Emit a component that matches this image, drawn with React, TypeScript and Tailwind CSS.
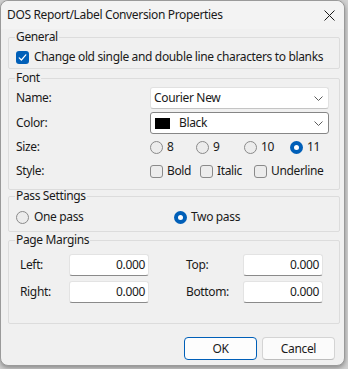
import type { ReactNode } from "react";

const font = { fontFamily: '"Noto Sans", "Segoe UI", sans-serif' };

function Check({ on }: { on?: boolean }) {
  if (on)
    return (
      <span className="flex size-[13px] shrink-0 items-center justify-center rounded-[3px] bg-[#005fb8]">
        <svg width="9" height="9" viewBox="0 0 9 9" fill="none">
          <path d="M1.2 4.8 3.4 7 7.8 1.8" stroke="#fff" strokeWidth="1.2" strokeLinecap="round" strokeLinejoin="round" />
        </svg>
      </span>
    );
  return <span className="size-[13px] shrink-0 rounded-[3px] border border-[#8a8a8a] bg-[#ececec]" />;
}

function Radio({ on }: { on?: boolean }) {
  if (on)
    return (
      <span className="flex size-[13px] shrink-0 items-center justify-center rounded-full bg-[#005fb8]">
        <span className="size-[5px] rounded-full bg-white" />
      </span>
    );
  return <span className="size-[13px] shrink-0 rounded-full border border-[#8a8a8a] bg-[#ececec]" />;
}

function Chevron() {
  return (
    <svg width="9" height="5" viewBox="0 0 9 5" fill="none" className="ml-auto mr-[5px]">
      <path d="M0.5 0.5 4.5 4.5 8.5 0.5" stroke="#5c5c5c" strokeWidth="1" />
    </svg>
  );
}

function Group({ title, className, children }: { title: string; className?: string; children: ReactNode }) {
  return (
    <fieldset className={`rounded-[2px] border border-[#dcdcdc] pl-[7px] pr-[10px] ${className ?? ""}`}>
      <legend className="ml-[-1px] px-[1px] leading-[16px]">{title}</legend>
      {children}
    </fieldset>
  );
}

function Num({ value }: { value: string }) {
  return (
    <div className="flex h-[22px] w-[80px] items-center justify-end rounded-[3px] border border-[#e3e3e3] border-b-[#8a8a8a] bg-white pr-[3px]">
      {value}
    </div>
  );
}

export default function App() {
  return (
    <div className="h-[369px] w-[348px] whitespace-nowrap bg-[#d2d2d2] text-[12px] tracking-[-0.35px] text-[#1a1a1a]" style={font}>
      <div className="flex h-[366px] w-[345px] flex-col rounded-[8px] border border-[#9a9a9a] bg-[#f0f0f0] shadow-[0_2px_5px_rgba(0,0,0,0.35)]">
        <div className="flex h-[28px] shrink-0 items-center rounded-t-[8px] bg-[#f3f3f3] pl-[6px] pr-[9px]">
          <span>DOS Report/Label Conversion Properties</span>
          <svg width="11" height="11" viewBox="0 0 11 11" className="ml-auto" fill="none">
            <path d="M0.5 0.5 10.5 10.5M10.5 0.5 0.5 10.5" stroke="#1a1a1a" strokeWidth="1" />
          </svg>
        </div>

        <div className="flex flex-1 flex-col pl-[7px] pr-[4px]">
          <Group title="General" className="pb-[3px]">
            <div className="mt-[4px] flex h-[16px] items-center gap-[5px]">
              <Check on />
              <span>Change old single and double line characters to blanks</span>
            </div>
          </Group>

          <Group title="Font" className="mt-[1px] pb-[10px]">
            <div className="mt-[1px] flex h-[22px] items-center">
              <span className="w-[134px]">Name:</span>
              <div className="flex h-[22px] flex-1 items-center rounded-[3px] border border-[#e1e1e1] border-b-[#c4c4c4] bg-white pl-[3px]">
                Courier New
                <Chevron />
              </div>
            </div>
            <div className="mt-[3px] flex h-[22px] items-center">
              <span className="w-[134px]">Color:</span>
              <div className="flex h-[22px] flex-1 items-center rounded-[3px] border border-[#868686] bg-white pl-[4px]">
                <span className="mr-[9px] h-[11px] w-[15px] bg-black" />
                Black
                <Chevron />
              </div>
            </div>
            <div className="mt-[5px] flex h-[16px] items-center">
              <span className="w-[134px]">Size:</span>
              <div className="flex w-[46px] items-center gap-[4px]"><Radio />8</div>
              <div className="flex w-[48px] items-center gap-[4px]"><Radio />9</div>
              <div className="flex w-[46px] items-center gap-[4px]"><Radio />10</div>
              <div className="flex items-center gap-[4px]"><Radio on />11</div>
            </div>
            <div className="mt-[8px] flex h-[16px] items-center">
              <span className="w-[134px]">Style:</span>
              <div className="flex w-[50px] items-center gap-[4px]"><Check />Bold</div>
              <div className="flex w-[54px] items-center gap-[4px]"><Check />Italic</div>
              <div className="flex items-center gap-[4px]"><Check />Underline</div>
            </div>
          </Group>

          <Group title="Pass Settings" className="mt-[-2px] pb-[6px]">
            <div className="mt-[5px] flex h-[16px] items-center">
              <div className="flex w-[158px] items-center gap-[5px]"><Radio />One pass</div>
              <div className="flex items-center gap-[4px]"><Radio on />Two pass</div>
            </div>
          </Group>

          <Group title="Page Margins" className="pb-[20px]">
            <div className="mt-[6px] flex h-[22px] items-center pl-[4px]">
              <span className="w-[49px]">Left:</span>
              <Num value="0.000" />
              <span className="ml-[37px] w-[57px]">Top:</span>
              <Num value="0.000" />
            </div>
            <div className="mt-[5px] flex h-[22px] items-center pl-[4px]">
              <span className="w-[49px]">Right:</span>
              <Num value="0.000" />
              <span className="ml-[37px] w-[57px]">Bottom:</span>
              <Num value="0.000" />
            </div>
          </Group>

          <div className="mt-[13px] flex justify-end gap-[5px] pr-[5px]">
            <button className="h-[23px] w-[73px] rounded-[4px] border border-[#005fb8] bg-[#fdfdfd]">OK</button>
            <button className="h-[23px] w-[73px] rounded-[4px] border border-[#d4d4d4] border-b-[#bdbdbd] bg-[#fbfbfb]">Cancel</button>
          </div>
        </div>
      </div>
    </div>
  );
}
